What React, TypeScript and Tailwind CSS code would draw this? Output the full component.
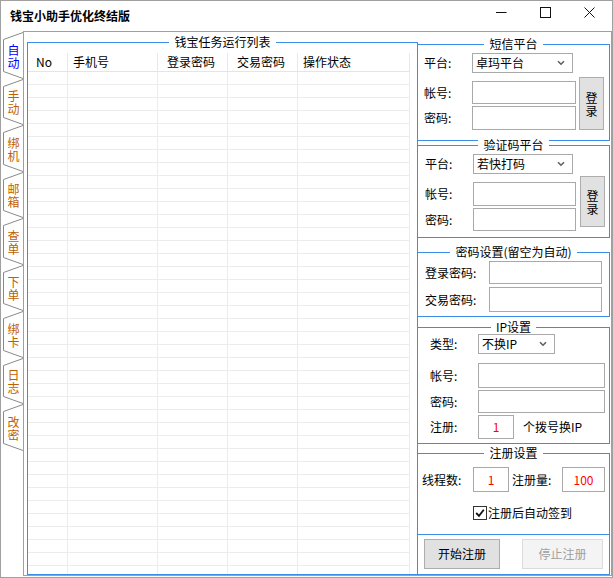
import React from "react";

const F = "font-['Noto_Sans_CJK_SC','Noto_Sans',sans-serif]";

const TABS = ["自动", "手动", "绑机", "邮箱", "查单", "下单", "绑卡", "日志", "改密"];

function Tab({ label, active, tall }: { label: string; active: boolean; tall: boolean }) {
  const h = tall ? 47 : 46;
  return (
    <div className={"relative w-[22px] flex items-center justify-center " + (tall ? "h-[47px]" : "h-[46px]")}>
      <svg className="absolute inset-0" width="22" height={h} viewBox={`0 0 22 ${h}`}>
        <polyline
          points={`22,0.5 2.5,7.5 2.5,${h - 7.5} 22,${h - 0.5}`}
          fill="#ffffff"
          stroke="#8a8a8a"
          strokeWidth="1"
        />
      </svg>
      <span
        className={
          "relative block w-[12px] ml-[3px] text-[12px] leading-[13px] break-all text-center " +
          (active ? "text-[#0000ff]" : "text-[#c05f00]")
        }
      >
        {label}
      </span>
    </div>
  );
}

function Panel({ title, cls, children }: { title?: string; cls: string; children?: React.ReactNode }) {
  return (
    <div className={"relative border-r border-[#3a8ee6] " + cls}>
      {title && (
        <div className="absolute left-0 right-0 top-[-8px] flex justify-center">
          <span className="bg-white px-[5px] text-[12px] leading-[14px] text-black">{title}</span>
        </div>
      )}
      {children}
    </div>
  );
}

function Box({ cls, children }: { cls: string; children?: React.ReactNode }) {
  return (
    <div className={"border border-[#a9a9a9] bg-white flex items-center justify-center text-[12px] text-[#ff0000] " + cls}>
      {children}
    </div>
  );
}

function Select({ cls, text }: { cls: string; text: string }) {
  return (
    <div className={"flex items-center border border-[#a9a9a9] bg-white pl-[3px] pr-[7px] text-[12px] " + cls}>
      <span className="flex-1 leading-[14px]">{text}</span>
      <svg width="8" height="6" viewBox="0 0 8 6">
        <path d="M1 1.2 L4 4.2 L7 1.2" stroke="#606060" strokeWidth="1.6" fill="none" />
      </svg>
    </div>
  );
}

function VBtn({ cls }: { cls: string }) {
  return (
    <div className={"flex items-center justify-center bg-[#e1e1e1] border border-[#adadad] " + cls}>
      <span className="block w-[12px] text-[12px] leading-[13px] break-all text-center">登录</span>
    </div>
  );
}

export default function App() {
  const rows = Array.from({ length: 39 });
  return (
    <div className={"w-[613px] h-[578px] bg-white border border-[#a0a0a0] flex flex-col text-black overflow-hidden " + F}>
      {/* title bar */}
      <div className="h-[30px] flex items-start justify-between">
        <div className="pl-[9px] pt-[7px] text-[12px] leading-[16px] font-bold">钱宝小助手优化终结版</div>
        <div className="flex">
          <div className="w-[44px] h-[22px] flex items-center justify-center">
            <svg width="11" height="11" viewBox="0 0 11 11"><path d="M0 5.5 H10.5" stroke="#111" strokeWidth="1" /></svg>
          </div>
          <div className="w-[44px] h-[22px] flex items-center justify-center">
            <svg width="11" height="11" viewBox="0 0 11 11"><rect x="0.5" y="0.5" width="10" height="10" fill="none" stroke="#111" strokeWidth="1" /></svg>
          </div>
          <div className="w-[44px] h-[22px] flex items-center justify-center mr-[1px]">
            <svg width="11" height="11" viewBox="0 0 11 11"><path d="M0.5 0.5 L10.5 10.5 M10.5 0.5 L0.5 10.5" stroke="#111" strokeWidth="1" /></svg>
          </div>
        </div>
      </div>

      {/* body */}
      <div className="h-[545px] flex">
        {/* tab strip */}
        <div className="w-[22px] flex flex-col pt-[1px]">
          {TABS.map((t, i) => (
            <Tab key={t} label={t} active={i === 0} tall={i % 2 === 0} />
          ))}
        </div>

        {/* tab page */}
        <div className="w-[589px] h-[545px] border border-[#a0a0a0] flex">
          {/* table group */}
          <div className="relative ml-[3px] mt-[10px] w-[391px] h-[533px] border border-[#3a8ee6] flex flex-col">
            <div className="absolute left-0 right-0 top-[-8px] flex justify-center">
              <span className="bg-white px-[5px] text-[12px] leading-[14px]">钱宝任务运行列表</span>
            </div>
            <div className="mt-[10px] flex flex-col flex-1 overflow-hidden">
              <div className="h-[19px] w-[382px] flex border-b border-[#e5e5e5] text-[12px] leading-[18px]">
                <div className="w-[40px] border-r border-[#e8e8e8] pl-[8px]">No</div>
                <div className="w-[90px] border-r border-[#e8e8e8] pl-[5px]">手机号</div>
                <div className="w-[70px] border-r border-[#e8e8e8] pl-[9px]">登录密码</div>
                <div className="w-[70px] border-r border-[#e8e8e8] pl-[9px]">交易密码</div>
                <div className="w-[112px] border-r border-[#e8e8e8] pl-[5px]">操作状态</div>
              </div>
              {rows.map((_, i) => (
                <div key={i} className="h-[13px] w-[382px] flex shrink-0 border-b border-[#ececec]">
                  <div className="w-[40px] border-r border-[#ececec]" />
                  <div className="w-[90px] border-r border-[#ececec]" />
                  <div className="w-[70px] border-r border-[#ececec]" />
                  <div className="w-[70px] border-r border-[#ececec]" />
                  <div className="w-[112px] border-r border-[#ececec]" />
                </div>
              ))}
            </div>
          </div>

          {/* right column */}
          <div className="w-[192px] flex flex-col pt-[12px] text-[12px] leading-[14px]">
            <Panel title="短信平台" cls="h-[97px] border-y">
              <div className="pl-[6px] pt-[8px]">
                <div className="flex items-center h-[20px]">
                  <span className="w-[48px]">平台:</span>
                  <Select cls="w-[101px] h-[20px]" text="卓玛平台" />
                </div>
                <div className="flex mt-[4px]">
                  <div className="flex flex-col pt-[4px] gap-[2px]">
                    <div className="flex items-center">
                      <span className="w-[48px]">帐号:</span>
                      <Box cls="w-[104px] h-[23px]" />
                    </div>
                    <div className="flex items-center">
                      <span className="w-[48px]">密码:</span>
                      <Box cls="w-[104px] h-[24px]" />
                    </div>
                  </div>
                  <VBtn cls="ml-[3px] w-[25px] h-[53px]" />
                </div>
              </div>
            </Panel>

            <Panel title="验证码平台" cls="mt-[4px] h-[93px] border-y">
              <div className="pl-[7px] pt-[8px]">
                <div className="flex items-center h-[20px]">
                  <span className="w-[48px]">平台:</span>
                  <Select cls="w-[100px] h-[20px]" text="若快打码" />
                </div>
                <div className="flex mt-[2px]">
                  <div className="flex flex-col pt-[6px] gap-[2px]">
                    <div className="flex items-center">
                      <span className="w-[48px]">帐号:</span>
                      <Box cls="w-[103px] h-[24px]" />
                    </div>
                    <div className="flex items-center">
                      <span className="w-[48px]">密码:</span>
                      <Box cls="w-[103px] h-[23px]" />
                    </div>
                  </div>
                  <VBtn cls="ml-[4px] w-[25px] h-[51px]" />
                </div>
              </div>
            </Panel>

            <Panel title="密码设置(留空为自动)" cls="mt-[14px] h-[65px] border-y">
              <div className="pl-[7px] pt-[8px] flex flex-col gap-[3px]">
                <div className="flex items-center">
                  <span className="w-[64px]">登录密码:</span>
                  <Box cls="w-[113px] h-[23px]" />
                </div>
                <div className="flex items-center">
                  <span className="w-[64px]">交易密码:</span>
                  <Box cls="w-[113px] h-[25px]" />
                </div>
              </div>
            </Panel>

            <Panel title="IP设置" cls="mt-[10px] h-[117px] border-y">
              <div className="pl-[12px] pt-[6px] flex flex-col">
                <div className="flex items-center">
                  <span className="w-[48px]">类型:</span>
                  <Select cls="w-[77px] h-[20px]" text="不换IP" />
                </div>
                <div className="flex items-center mt-[9px]">
                  <span className="w-[48px]">帐号:</span>
                  <Box cls="w-[127px] h-[25px]" />
                </div>
                <div className="flex items-center mt-[2px]">
                  <span className="w-[48px]">密码:</span>
                  <Box cls="w-[127px] h-[23px]" />
                </div>
                <div className="flex items-center mt-[2px]">
                  <span className="w-[48px]">注册:</span>
                  <Box cls="w-[36px] h-[24px]">1</Box>
                  <span className="ml-[9px]">个拨号换IP</span>
                </div>
              </div>
            </Panel>

            <Panel title="注册设置" cls="mt-[9px] h-[82px] border-y">
              <div className="pl-[4px] pt-[13px] flex flex-col">
                <div className="flex items-center">
                  <span className="w-[51px]">线程数:</span>
                  <Box cls="w-[36px] h-[25px]">1</Box>
                  <span className="ml-[3px] w-[50px]">注册量:</span>
                  <Box cls="w-[43px] h-[25px]">100</Box>
                </div>
                <div className="flex items-center mt-[14px] ml-[51px]">
                  <div className="w-[14px] h-[14px] border border-[#333333] bg-white flex items-center justify-center">
                    <svg width="10" height="10" viewBox="0 0 10 10">
                      <path d="M1.2 5 L4 7.8 L8.8 1.8" stroke="#111" strokeWidth="1.8" fill="none" />
                    </svg>
                  </div>
                  <span className="ml-[1px]">注册后自动签到</span>
                </div>
              </div>
            </Panel>

            <Panel cls="h-[40px] border-b">
              <div className="pl-[6px] pt-[4px] flex">
                <div className="w-[76px] h-[30px] bg-[#e1e1e1] border border-[#adadad] flex items-center justify-center">开始注册</div>
                <div className="ml-[22px] w-[81px] h-[30px] bg-[#f4f4f4] border border-[#dcdcdc] text-[#a0a0a0] flex items-center justify-center">停止注册</div>
              </div>
            </Panel>
          </div>
        </div>
      </div>
    </div>
  );
}
